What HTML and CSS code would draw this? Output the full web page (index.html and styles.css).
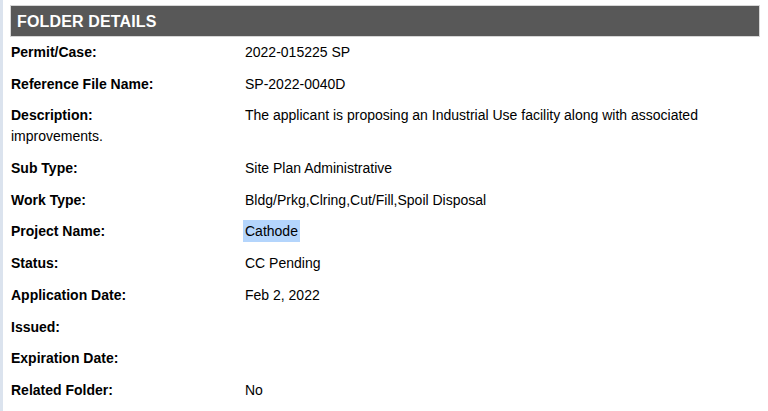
FILE: index.html
```html
<!DOCTYPE html>
<html lang="en">
<head>
<meta charset="utf-8">
<title>Folder Details</title>
<link rel="stylesheet" href="styles.css">
</head>
<body>
<div class="page">
  <div class="panel">
    <h2 class="panel-title">FOLDER DETAILS</h2>
    <div class="rows">
      <div class="row"><span class="label">Permit/Case:</span><span class="value">2022-015225 SP</span></div>
      <div class="row"><span class="label">Reference File Name:</span><span class="value">SP-2022-0040D</span></div>
      <div class="row"><span class="label">Description:</span><span class="value">The applicant is proposing an Industrial Use facility along with associated improvements.</span></div>
      <div class="row"><span class="label">Sub Type:</span><span class="value">Site Plan Administrative</span></div>
      <div class="row"><span class="label">Work Type:</span><span class="value">Bldg/Prkg,Clring,Cut/Fill,Spoil Disposal</span></div>
      <div class="row"><span class="label">Project Name:</span><span class="value"><span class="selected">Cathode</span></span></div>
      <div class="row"><span class="label">Status:</span><span class="value">CC Pending</span></div>
      <div class="row"><span class="label">Application Date:</span><span class="value">Feb 2, 2022</span></div>
      <div class="row"><span class="label">Issued:</span><span class="value"></span></div>
      <div class="row"><span class="label">Expiration Date:</span><span class="value"></span></div>
      <div class="row"><span class="label">Related Folder:</span><span class="value">No</span></div>
    </div>
  </div>
</div>
</body>
</html>
```

FILE: styles.css
```css
html, body {
  margin: 0;
  padding: 0;
  background: #ffffff;
}

body {
  font-family: "Liberation Sans", Arial, Helvetica, sans-serif;
  font-size: 14px;
  color: #000000;
  width: 768px;
  height: 411px;
  overflow: hidden;
}

.page {
  border-left: 3px solid #dbe3ee;
  min-height: 411px;
  box-sizing: border-box;
  padding: 5px 8px 0 7px;
}

.panel {
  width: 750px;
}

.panel-title {
  margin: 0;
  height: 32px;
  box-sizing: border-box;
  background: #585858;
  border: 1px solid #d6d6d6;
  color: #ffffff;
  font-size: 16px;
  font-weight: bold;
  letter-spacing: 0.15px;
  line-height: 31px;
  padding-left: 6px;
}

.row {
  line-height: 21px;
  padding: 5px 0 5.7px 1px;
}

.label {
  display: inline-block;
  width: 234px;
  font-weight: bold;
}

.value {
  color: #000000;
}

.selected {
  background: #b4d5fc;
  padding: 3px 2px;
  margin-left: -2px;
}
```
